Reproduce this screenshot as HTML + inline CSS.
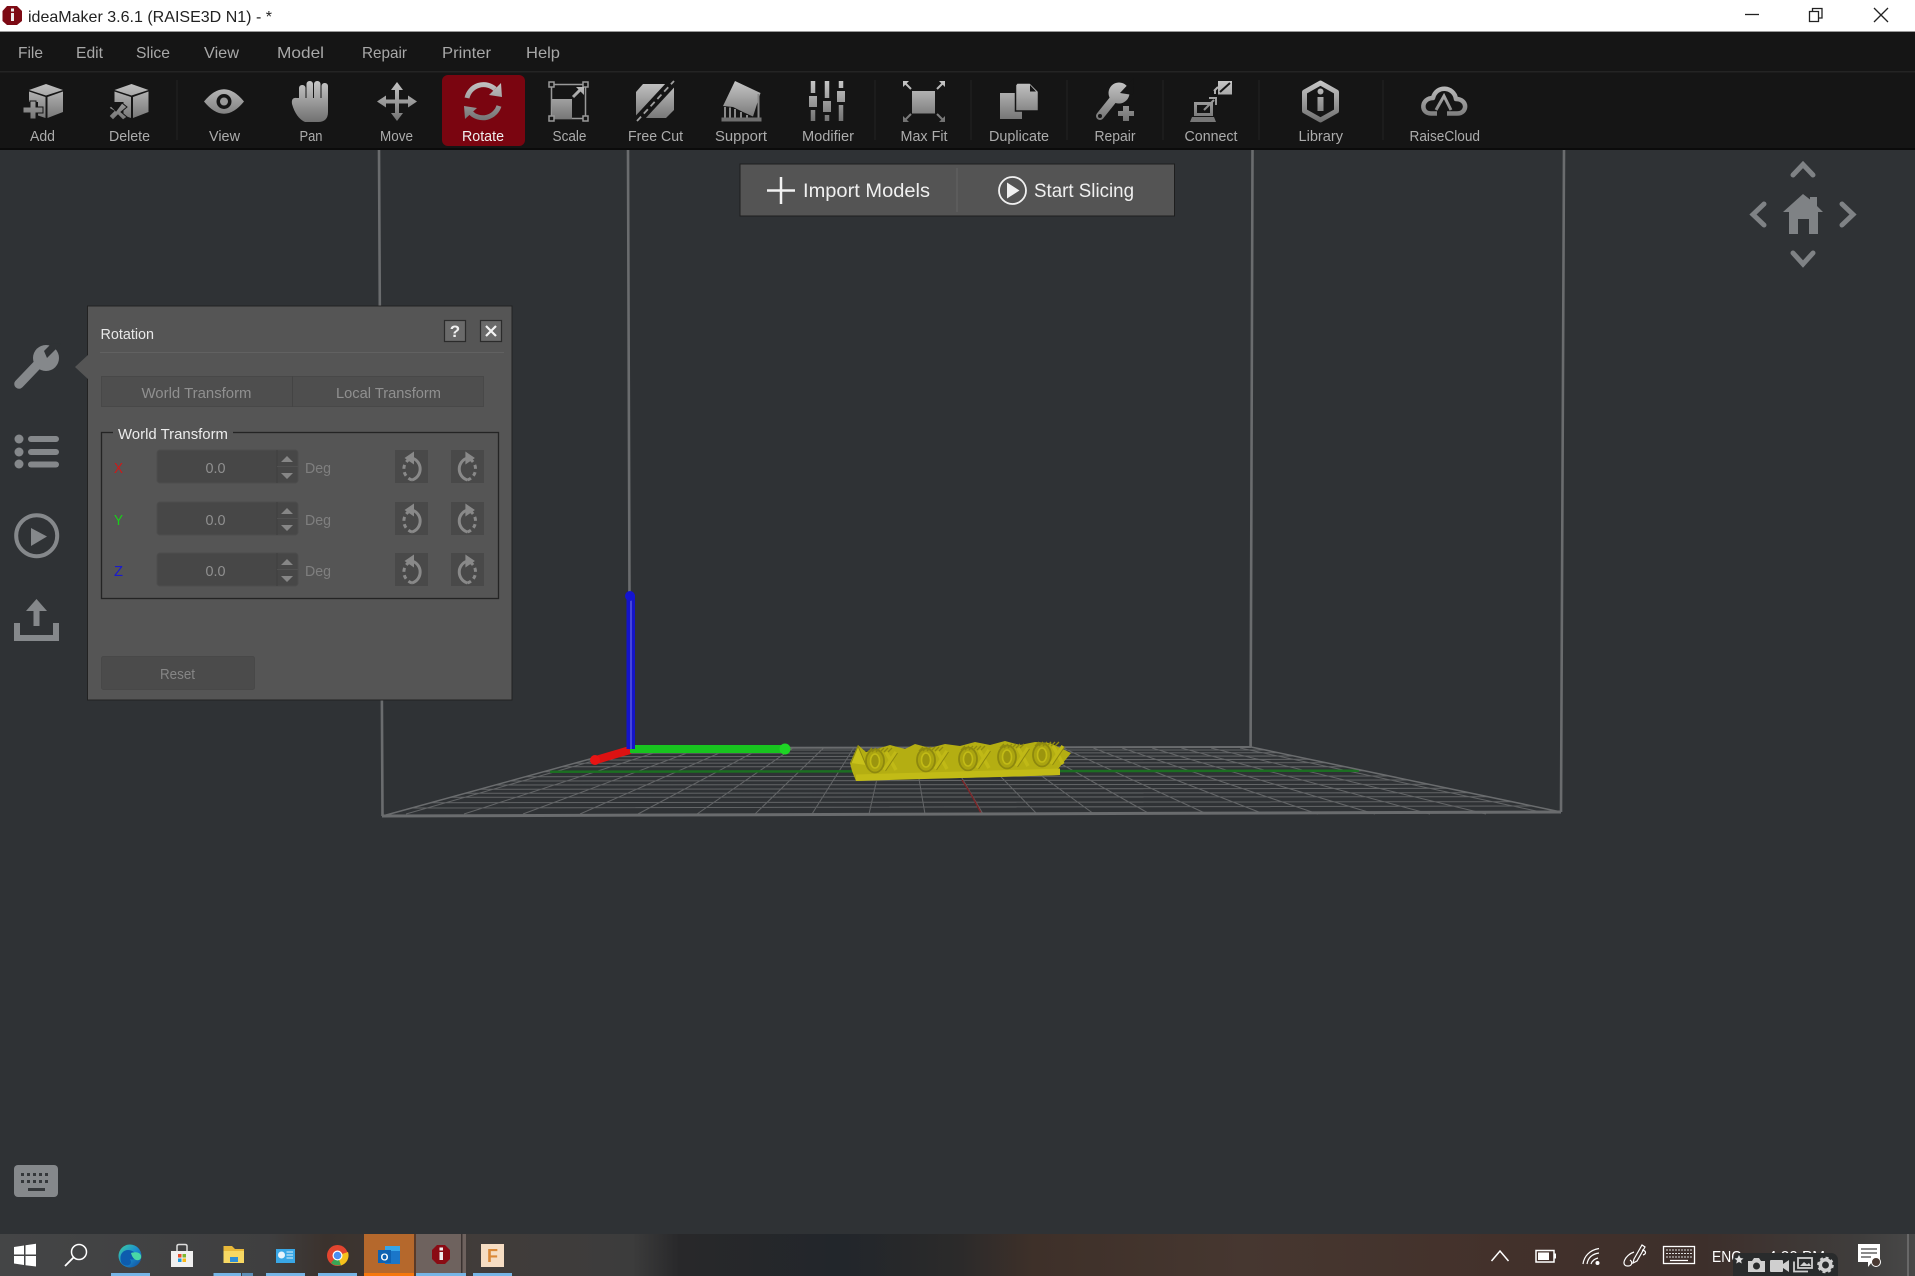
<!DOCTYPE html>
<html lang="en"><head><meta charset="utf-8"><title>ideaMaker 3.6.1 (RAISE3D N1) - *</title>
<style>html,body{margin:0;padding:0;background:#2f3235;overflow:hidden;width:1915px;height:1276px}svg{display:block}text{font-family:"Liberation Sans",sans-serif}</style></head><body>
<svg xmlns="http://www.w3.org/2000/svg" width="1915" height="1276" viewBox="0 0 1915 1276">
<defs>
<linearGradient id="g" gradientUnits="userSpaceOnUse" x1="0" y1="80" x2="0" y2="124"><stop offset="0" stop-color="#c8c8c8"/><stop offset="1" stop-color="#6c6c6c"/></linearGradient>
<linearGradient id="tb" x1="0" y1="0" x2="1" y2="0">
<stop offset="0" stop-color="#444546"/><stop offset=".14" stop-color="#3f3f40"/><stop offset=".17" stop-color="#3b322d"/><stop offset=".25" stop-color="#413c3a"/><stop offset=".33" stop-color="#3c3c3c"/><stop offset=".355" stop-color="#28282a"/><stop offset=".44" stop-color="#22262b"/><stop offset=".5" stop-color="#2b2a2a"/><stop offset=".54" stop-color="#3e3029"/><stop offset=".65" stop-color="#463730"/><stop offset=".78" stop-color="#43312b"/><stop offset=".89" stop-color="#3d2f2b"/><stop offset=".97" stop-color="#3f3d3c"/><stop offset="1" stop-color="#484848"/></linearGradient>
<linearGradient id="edge" x1="0" y1="0" x2="1" y2="1"><stop offset="0" stop-color="#3ecf9c"/><stop offset=".5" stop-color="#1b8fd0"/><stop offset="1" stop-color="#114a9a"/></linearGradient>
<g id="ccw" fill="none" stroke="#898989" stroke-width="3"><path d="M412 458 A11.500 11.500 0 0 1 412 480"/><path d="M412 480 A11.500 11.500 0 0 1 412 458" stroke-dasharray="4 3.400"/><path d="M404.500 458 L414 451.500 V464.500Z" fill="#898989" stroke="none"/></g>
<g id="spin"><rect x="157" y="450" width="141" height="33" rx="3" fill="#474747" stroke="#4d4d4d"/><path d="M277 450V483" stroke="#3f3f3f"/><path d="M277 466.500H298" stroke="#515151"/><path d="M281 462 L287 456 L293 462Z M281 473 H293 L287 479Z" fill="#868686"/><text x="205.500" y="473" font-size="14.500" fill="#909090" textLength="20" lengthAdjust="spacingAndGlyphs">0.0</text><text x="305" y="473" font-size="15" fill="#7f7f7f" textLength="26" lengthAdjust="spacingAndGlyphs">Deg</text><rect x="395" y="450" width="33" height="33" fill="#494949"/><rect x="451" y="450" width="33" height="33" fill="#494949"/><use href="#ccw"/><use href="#ccw" transform="translate(879.400 0) scale(-1 1)"/></g>
<g id="cube"><path d="M46 84 L63 90 L46 95.500 L29 90Z" fill="url(#g)"/><path d="M47.500 97 L63 91.500 V112 L47.500 118Z" fill="url(#g)"/><path d="M29 91.500 L45.500 97 V118 L38 115.500 V102 H29Z" fill="url(#g)"/></g>
<g id="yunit"><ellipse cx="0" cy="0" rx="9" ry="11.500" fill="#aaa410" stroke="#8d880e" stroke-width="1.800"/><ellipse cx="0" cy="0" rx="4.500" ry="7" fill="#9b950e" stroke="#c2bb16" stroke-width="1.600"/><path d="M9 9 L21 -9 M11 -9 L21 9" stroke="#c0b916" stroke-width="3.500"/><path d="M9 9 L21 -9" stroke="#8d880e" stroke-width="1" transform="translate(1.500 1)"/><path d="M-7 -9 L-3 -13 M-3 -9 L1 -13 M1 -9 L5 -13 M5 -9 L9 -13 M9 -9 L13 -13 M13 -9 L17 -13" stroke="#918b0f" stroke-width="1.300"/></g>
</defs>

<rect width="1915" height="1276" fill="#2f3235"/>
<!-- title bar -->
<rect width="1915" height="31" fill="#fff"/><rect y="31" width="1915" height="1" fill="#9a9a9a"/>
<path d="M7 6 H17 L22 11 V21 L17 25 H7 L2.500 21 V11Z" fill="#7d0a14"/><rect x="11" y="13" width="3" height="8" fill="#eee"/><rect x="11" y="8.500" width="3" height="3" fill="#eee"/>
<text x="28" y="22" font-size="16" fill="#222" textLength="244" lengthAdjust="spacingAndGlyphs">ideaMaker 3.6.1 (RAISE3D N1) - *</text>
<path d="M1745 14.500H1759" stroke="#222" stroke-width="1.300"/>
<path d="M1809.500 11.500H1818.500V21.500H1809.500Z M1812.500 11V8.500H1822V18H1819" fill="none" stroke="#222" stroke-width="1.300"/>
<path d="M1874 8L1888 22M1888 8L1874 22" stroke="#222" stroke-width="1.300"/>
<!-- menu + toolbar -->
<rect y="32" width="1915" height="117" fill="#151515"/><rect y="71" width="1915" height="1.500" fill="#242424"/><rect y="148" width="1915" height="2" fill="#0b0b0b"/>
<g font-size="16" fill="#a8a8a8">
<text x="18" y="58" textLength="25" lengthAdjust="spacingAndGlyphs">File</text>
<text x="76" y="58" textLength="27" lengthAdjust="spacingAndGlyphs">Edit</text>
<text x="136" y="58" textLength="34" lengthAdjust="spacingAndGlyphs">Slice</text>
<text x="204" y="58" textLength="35" lengthAdjust="spacingAndGlyphs">View</text>
<text x="277" y="58" textLength="47" lengthAdjust="spacingAndGlyphs">Model</text>
<text x="362" y="58" textLength="45" lengthAdjust="spacingAndGlyphs">Repair</text>
<text x="442" y="58" textLength="49" lengthAdjust="spacingAndGlyphs">Printer</text>
<text x="526" y="58" textLength="34" lengthAdjust="spacingAndGlyphs">Help</text>
</g>
<path d="M177 80V140M875 80V140M971 80V140M1067 80V140M1163 80V140M1259 80V140M1383 80V140" stroke="#232323"/>
<rect x="442" y="75" width="83" height="71" rx="6" fill="#7a0510"/>
<g font-size="15" fill="#acacac">
<text x="30" y="141" textLength="25" lengthAdjust="spacingAndGlyphs">Add</text>
<text x="109" y="141" textLength="41" lengthAdjust="spacingAndGlyphs">Delete</text>
<text x="209" y="141" textLength="31" lengthAdjust="spacingAndGlyphs">View</text>
<text x="299.500" y="141" textLength="23" lengthAdjust="spacingAndGlyphs">Pan</text>
<text x="380" y="141" textLength="33" lengthAdjust="spacingAndGlyphs">Move</text>
<text x="462" y="141" textLength="42" lengthAdjust="spacingAndGlyphs" fill="#efefef">Rotate</text>
<text x="552.500" y="141" textLength="34" lengthAdjust="spacingAndGlyphs">Scale</text>
<text x="628" y="141" textLength="55" lengthAdjust="spacingAndGlyphs">Free Cut</text>
<text x="715" y="141" textLength="52" lengthAdjust="spacingAndGlyphs">Support</text>
<text x="802" y="141" textLength="52" lengthAdjust="spacingAndGlyphs">Modifier</text>
<text x="900.500" y="141" textLength="47" lengthAdjust="spacingAndGlyphs">Max Fit</text>
<text x="989" y="141" textLength="60" lengthAdjust="spacingAndGlyphs">Duplicate</text>
<text x="1094.500" y="141" textLength="41" lengthAdjust="spacingAndGlyphs">Repair</text>
<text x="1184.500" y="141" textLength="53" lengthAdjust="spacingAndGlyphs">Connect</text>
<text x="1298.500" y="141" textLength="44.500" lengthAdjust="spacingAndGlyphs">Library</text>
<text x="1409.500" y="141" textLength="70.500" lengthAdjust="spacingAndGlyphs">RaiseCloud</text>
</g>
<!-- Add -->
<use href="#cube"/><path d="M30 101H36V107H43V113H36V119H30V113H23V107H30Z" fill="url(#g)" stroke="#151515" stroke-width="1"/>
<!-- Delete -->
<use href="#cube" transform="translate(85.500 0)"/><path d="M111 106L116 111 L122 103 L127 107 L121 112 L127 117 L123 120 L118 115 L113 120 L109 116 L114 111 L109 108Z" fill="url(#g)" stroke="#151515" stroke-width="1"/>
<!-- View -->
<path d="M204 101.500 Q224 77 244 101.500 Q224 126 204 101.500Z" fill="url(#g)"/><circle cx="224" cy="101.500" r="7.500" fill="#151515"/><circle cx="224" cy="101.500" r="4" fill="#999"/>
<!-- Pan -->
<g fill="url(#g)"><rect x="299" y="85" width="6.500" height="20" rx="3"/><rect x="306.500" y="81" width="6.500" height="24" rx="3"/><rect x="314" y="81" width="6.500" height="24" rx="3"/><rect x="321.500" y="83" width="6.500" height="24" rx="3"/><path d="M299 98 H328 V112 Q328 122 318 122 H305 Q296 118 292 104 Q291 97 297 98Z"/></g>
<!-- Move -->
<path d="M397 82 L403 90 H399 V99.500 H408 V95.500 L417 101.500 L408 107.500 V103.500 H399 V113 H403 L397 121 L391 113 H395 V103.500 H386 V107.500 L377 101.500 L386 95.500 V99.500 H395 V90 H391Z" fill="url(#g)"/>
<!-- Rotate -->
<g fill="none" stroke="url(#g)" stroke-width="5"><path d="M467 98 A17 17 0 0 1 495 89"/><path d="M499 106 A17 17 0 0 1 471 113"/></g><path d="M489 95 L502 97 L501 83Z M464 106 L477 108 L465 119Z" fill="url(#g)"/>
<!-- Scale -->
<rect x="551.500" y="84.500" width="34" height="34" fill="none" stroke="#999" stroke-width="1.500"/><rect x="552" y="99" width="20" height="20" fill="url(#g)"/>
<g fill="#151515" stroke="#999" stroke-width="1.500"><rect x="549" y="82" width="5" height="5"/><rect x="583" y="82" width="5" height="5"/><rect x="549" y="116" width="5" height="5"/><rect x="583" y="116" width="5" height="5"/></g>
<path d="M573 97 L580 90" stroke="url(#g)" stroke-width="3"/><path d="M576 87 H584 V95Z" fill="url(#g)"/>
<!-- Free Cut -->
<path d="M643 84 H674 V110 L666 118 H636 V92Z" fill="url(#g)"/><path d="M637 121 L674 81" stroke="#151515" stroke-width="9"/><path d="M637 121 L674 81" stroke="#a0a0a0" stroke-width="1.800" stroke-dasharray="6 4"/>
<!-- Support -->
<path d="M735 81 L760.500 93 L753 116.500 L743 112 L733 107 L723 106Z" fill="url(#g)"/><path d="M725 107V118M730 107.500V118M735 109V118M741 112V118M747 115V118M758.500 94V118" stroke="#888" stroke-width="2"/><rect x="721.500" y="117.500" width="40" height="4" fill="#6f6f6f"/>
<!-- Modifier -->
<g stroke="url(#g)" stroke-width="4.500"><path d="M813 81V93M813 110V121M827 81V98M827 115V121M841 81V88M841 105V121"/></g><g fill="url(#g)"><rect x="809" y="96" width="8" height="11"/><rect x="823" y="101" width="8" height="11"/><rect x="837" y="91" width="8" height="11"/></g>
<!-- Max Fit -->
<rect x="912" y="91" width="23" height="22.500" fill="url(#g)"/><path d="M903 81H909L903 87Z M945 81H939L945 87Z M903 122H909L903 116Z M945 122H939L945 116Z" fill="url(#g)"/><path d="M905 83L911 89M943 83L937 89M905 120L911 114M943 120L937 114" stroke="url(#g)" stroke-width="2"/>
<!-- Duplicate -->
<rect x="1000" y="93" width="22" height="26" fill="url(#g)"/><path d="M1017 83 H1030 L1038.500 91.500 V111 H1015.500 V85Z" fill="url(#g)" stroke="#151515" stroke-width="1.500"/><path d="M1030 85 V91.500 H1036" fill="#151515"/>
<!-- Repair -->
<path d="M1100 116 L1116 96" stroke="url(#g)" stroke-width="8" stroke-linecap="round"/><circle cx="1119" cy="93" r="10.500" fill="url(#g)"/><path d="M1120 93 L1134 78 L1133 95Z" fill="#151515"/><circle cx="1100" cy="116" r="2" fill="#151515"/><path d="M1123 106H1129V111H1134V116H1129V121H1123V116H1118V111H1123Z" fill="url(#g)"/>
<!-- Connect -->
<path d="M1194 102H1213V116H1194ZM1197 105V113H1210V105Z" fill="url(#g)" fill-rule="evenodd"/><path d="M1192 117 H1214 L1216 122 H1190Z" fill="#777"/><rect x="1218" y="81" width="14" height="13.500" fill="url(#g)"/><path d="M1220 92L1230 83" stroke="#151515" stroke-width="2"/><path d="M1214 91L1218 87M1204 110L1214 100M1209 98H1216V105M1215 94V90" stroke="url(#g)" stroke-width="2" fill="none"/>
<!-- Library -->
<path d="M1320.500 83 L1336.500 92 V111 L1320.500 120 L1304.500 111 V92Z" fill="none" stroke="url(#g)" stroke-width="5" stroke-linejoin="round"/><circle cx="1320.500" cy="91.500" r="3" fill="url(#g)"/><rect x="1317.500" y="97" width="6" height="14" fill="url(#g)"/>
<!-- RaiseCloud -->
<path d="M1437 113.500 H1431 C1420 113.500 1421 98 1433 98 C1436 85 1454 86 1456 99 C1468 99 1468 113.500 1457 113.500 H1447" fill="none" stroke="url(#g)" stroke-width="4.500" stroke-linejoin="round"/><path d="M1436 110 L1444 96 L1451 110" fill="none" stroke="url(#g)" stroke-width="3"/>

<!-- cage -->
<path d="M411.700 808L1532.400 806M431 802.700L1511.900 801.700M450.600 797.300L1488 796.700M465 793.300L1469 792.700M479.700 789.300L1448 788.300M495.400 785L1428.900 784.300M510 781L1408.400 780M525.600 776.700L1389.300 776M543.800 771.700L1364 770.700M562 766.700L1345 766.700M574.300 763.300L1325.800 762.700M586.300 760L1309.600 759.300M598.300 756.700L1293.900 756M610.700 753.300L1278 752.700M622.700 750L1265 750M406 814L638.600 748M464 814L669.300 748M523 814L700.600 748M580 814L730.800 748M638 814L761.500 748M697 814L792.800 748M755 814L823.500 748M812 814L853.700 748M869 814L884 748M925 814L913.700 748M983 814L944.400 748M1037 814L973 748M1094 814L1003.200 748M1150 814L1033 748M1207 814L1063 748M1264 814L1093.300 748M1318 814L1122 748M1375 814L1152 748M1430 814L1181.300 748M1486 814L1211 748M1541 812L1240 748" stroke="#636567" stroke-width="1" fill="none"/>
<path d="M550 771.700L1359 770.700" stroke="#1c6e22" stroke-width="2.500"/>
<path d="M962 780Q972 795 981 813" stroke="#7a2528" stroke-width="1.500" fill="none"/>
<g stroke="#6a6c6e" fill="none"><path d="M379 150L382.500 816M628 150L630 748M1252.500 150L1250.600 747M1564 150L1561 812" stroke-width="2.600"/><path d="M382 816L1561 812" stroke-width="3"/><path d="M630 748L1251 747" stroke-width="2"/><path d="M382.500 816L630 748M1561 812L1251 747" stroke-width="1.500"/></g>
<!-- yellow model -->
<path d="M850 763 L858 745 L866 752 L880 748 L890 745 L905 749 L915 744 L930 748 L945 744 L960 746 L975 742 L990 745 L1005 741 L1020 745 L1035 742 L1050 743 L1071 753 L1058 769 L1060 775 L1000 777 L960 778 L900 779 L856 781 L852 771Z" fill="#b4ae12"/>
<use href="#yunit" transform="translate(875 761)"/><use href="#yunit" transform="translate(926 760)"/><use href="#yunit" transform="translate(968 759)"/><use href="#yunit" transform="translate(1007 757)"/><use href="#yunit" transform="translate(1042 755)"/>
<path d="M856 774.500 L960 771.500 L1060 768.500 V775 L960 778 L856 781Z" fill="#c2bb16"/>
<path d="M851 763 L858 746 L866 765" fill="#c8c11a" stroke="#8d880e"/>
<!-- axes -->
<path d="M630 750L596 760" stroke="#dd1212" stroke-width="8"/><circle cx="595" cy="760" r="5" fill="#e81414"/>
<rect x="630" y="745" width="155" height="8" fill="#18c41f"/><circle cx="785" cy="749" r="5.500" fill="#1ed425"/>
<rect x="626.500" y="595" width="8.500" height="154" fill="#1414c8"/><rect x="630" y="595" width="2" height="154" fill="#4545dc"/><circle cx="630" cy="596" r="5" fill="#1414d0"/>

<!-- import bar -->
<rect x="740" y="164" width="434.500" height="52" fill="#545454" stroke="#1e1e1e"/>
<path d="M957 168V212" stroke="#646464"/>
<path d="M781 177V204M767 190.500H795" stroke="#f2f2f2" stroke-width="2.500"/>
<text x="803" y="197" font-size="19.500" fill="#f0f0f0" textLength="127" lengthAdjust="spacingAndGlyphs">Import Models</text>
<circle cx="1012.500" cy="190.500" r="13.500" fill="none" stroke="#f0f0f0" stroke-width="1.800"/><path d="M1007 182.500 L1019.500 190.500 L1007 198.500Z" fill="#f0f0f0"/>
<text x="1034" y="197" font-size="19.500" fill="#f0f0f0" textLength="100" lengthAdjust="spacingAndGlyphs">Start Slicing</text>

<!-- nav -->
<g fill="none" stroke="#7f8285" stroke-width="5" stroke-linecap="round"><path d="M1793 175 L1803 164.500 L1813 175"/><path d="M1793 253 L1803 264 L1813 253"/><path d="M1764 204 L1753 214.500 L1764 225"/><path d="M1842 204 L1853 214.500 L1842 225"/></g>
<path d="M1803 194 L1810 199.500 V197 H1817 V206 L1823 212 H1818 V234 H1809 V219 H1798 V234 H1789 V212 H1783Z" fill="#7f8285"/>

<!-- side icons -->
<g fill="#85888b"><path d="M19 384 L40 362" stroke="#85888b" stroke-width="9.500" stroke-linecap="round"/><circle cx="46" cy="358" r="13"/><path d="M47 358 L61 344 L52 343 L44 351Z" fill="#2f3235"/>
<circle cx="19" cy="439" r="4.500"/><circle cx="19" cy="452" r="4.500"/><circle cx="19" cy="464" r="4.500"/><rect x="28" y="436" width="31" height="6" rx="3"/><rect x="28" y="449" width="31" height="6" rx="3"/><rect x="28" y="461.500" width="31" height="6" rx="3"/>
<path d="M31 528 V546 L47 536.500Z"/><path d="M26 611 L36.500 599 L47 611 H39.500 V626 H33.500 V611Z"/><path d="M14 623 H20 V635 H53 V623 H59 V641 H14Z"/></g>
<circle cx="36.700" cy="535.700" r="20.500" fill="none" stroke="#85888b" stroke-width="4"/>
<rect x="14" y="1165" width="44" height="32" rx="4" fill="#85888b"/>
<path d="M21 1173h3v3h-3zM27 1173h3v3h-3zM33 1173h3v3h-3zM39 1173h3v3h-3zM45 1173h3v3h-3zM21 1180h3v3h-3zM27 1180h3v3h-3zM33 1180h3v3h-3zM39 1180h3v3h-3zM45 1180h3v3h-3zM28 1188h17v3h-17z" fill="#34373a"/>

<!-- rotation panel -->
<rect x="87.500" y="306" width="424.500" height="394" fill="#555" stroke="#222" stroke-width="1"/>
<path d="M89 354 L75 367 L89 380Z" fill="#555"/>
<text x="100.500" y="339" font-size="15" fill="#e8e8e8" textLength="53.500" lengthAdjust="spacingAndGlyphs">Rotation</text>
<path d="M100 352.500H504" stroke="#616161"/>
<rect x="444.500" y="320.500" width="21" height="21" fill="#6a6a6a" stroke="#2b2b2b" stroke-width="1.200"/>
<text x="455" y="337" font-size="17" font-weight="bold" text-anchor="middle" fill="#f0f0f0">?</text>
<rect x="480.500" y="320.500" width="21" height="21" fill="#6a6a6a" stroke="#2b2b2b" stroke-width="1.200"/>
<path d="M486 326L496 336M496 326L486 336" stroke="#f4f4f4" stroke-width="2.200"/>
<rect x="101.500" y="376.500" width="382" height="30" fill="#4e4e4e" stroke="#484848"/><path d="M292.500 376V407" stroke="#444"/>
<text x="141.500" y="398" font-size="15" fill="#909090" textLength="110" lengthAdjust="spacingAndGlyphs">World Transform</text>
<text x="336" y="398" font-size="15" fill="#909090" textLength="105" lengthAdjust="spacingAndGlyphs">Local Transform</text>
<rect x="101.500" y="432.500" width="397" height="166" fill="none" stroke="#242424" stroke-width="1.300"/>
<rect x="113" y="428" width="120" height="8" fill="#555"/>
<text x="118" y="439" font-size="15" fill="#ececec" textLength="110" lengthAdjust="spacingAndGlyphs">World Transform</text>
<use href="#spin"/><use href="#spin" transform="translate(0 52)"/><use href="#spin" transform="translate(0 103)"/>
<text x="114" y="473" font-size="15" fill="#d01818" textLength="9" lengthAdjust="spacingAndGlyphs">X</text>
<text x="114" y="525" font-size="15" fill="#18d018" textLength="9" lengthAdjust="spacingAndGlyphs">Y</text>
<text x="114" y="576" font-size="15" fill="#1a1ad0" textLength="9" lengthAdjust="spacingAndGlyphs">Z</text>
<rect x="101.500" y="656.500" width="153" height="33" rx="2" fill="#4b4b4b" stroke="#484848"/>
<text x="160" y="679" font-size="15" fill="#868686" textLength="35" lengthAdjust="spacingAndGlyphs">Reset</text>

<!-- taskbar -->
<rect y="1234" width="1915" height="42" fill="url(#tb)"/>
<rect x="364" y="1234" width="50" height="42" fill="#b5682c"/><rect x="414" y="1234" width="2" height="42" fill="#5a3a28"/><rect x="416" y="1234" width="50" height="42" fill="#6e625e"/><rect x="461" y="1234" width="1.500" height="42" fill="#3a3230"/>
<g fill="#76b5e6"><rect x="111" y="1273" width="39" height="3"/><rect x="213.500" y="1273" width="27.500" height="3"/><rect x="242" y="1273" width="11" height="3" fill="#5d8fb8"/><rect x="266" y="1273" width="39" height="3"/><rect x="318" y="1273" width="39" height="3"/><rect x="416" y="1273" width="50" height="3"/><rect x="473" y="1273" width="39" height="3"/></g>
<rect x="364" y="1273" width="50" height="3" fill="#f7780c"/>
<path d="M14 1247 L24 1245.500 V1254.500 H14Z M25.500 1245.200 L36 1243.800 V1254.500 H25.500Z M14 1256 H24 V1265 L14 1263.500Z M25.500 1256 H36 V1266.500 L25.500 1265.200Z" fill="#fff"/>
<circle cx="79" cy="1252" r="7.500" fill="none" stroke="#fff" stroke-width="1.500"/><path d="M73.500 1257.500L65 1266" stroke="#fff" stroke-width="1.800"/>
<circle cx="130" cy="1256" r="11.500" fill="url(#edge)"/><path d="M121 1262 C118 1252 127 1247 134 1252 C140 1256 134 1261 130 1259 C134 1266 124 1268 121 1262Z" fill="#0d5cae"/><path d="M131 1253 C137 1251 142 1253 141 1258 C139 1262 133 1261 131 1253Z" fill="#49d8a6"/>
<path d="M171 1251 H193 V1267 H171Z" fill="#f0f0f0"/><path d="M177 1251 V1246 Q177 1244.500 179 1244.500 H185 Q187 1244.500 187 1246 V1251" fill="none" stroke="#ddd" stroke-width="1.500"/><rect x="178" y="1254" width="3.500" height="3.500" fill="#e74c2a"/><rect x="182.500" y="1254" width="3.500" height="3.500" fill="#7cb82f"/><rect x="178" y="1258.500" width="3.500" height="3.500" fill="#1c9ce0"/><rect x="182.500" y="1258.500" width="3.500" height="3.500" fill="#fab915"/>
<path d="M223.500 1246 H232 L235 1249 H244 V1263 H223.500Z" fill="#e8b839"/><path d="M223.500 1251 H244 V1263 H223.500Z" fill="#f7d863"/><rect x="230" y="1257" width="8" height="5" fill="#2f8fd6"/>
<rect x="276" y="1249" width="19" height="14" fill="#39a7e6"/><circle cx="281.500" cy="1255" r="3.500" fill="#e7f3fb"/><path d="M286.500 1252H293M286.500 1255H293M286.500 1258H293" stroke="#e0f0fa" stroke-width="1"/>
<circle cx="337.500" cy="1255.500" r="10.500" fill="#e3452f"/><path d="M337.500 1255.500 L331 1263 A10.500 10.500 0 0 0 345 1262.500 L348 1255Z" fill="#3aa655"/><path d="M337.500 1255.500 L348 1252 A10.500 10.500 0 0 1 341 1265.500Z" fill="#f6c11c"/><circle cx="337.500" cy="1255.500" r="5" fill="#fff"/><circle cx="337.500" cy="1255.500" r="3.800" fill="#4b8ef0"/>
<rect x="385" y="1246" width="15" height="18" fill="#1a76c9"/><rect x="385" y="1246" width="15" height="5" fill="#36a5e8"/><rect x="378" y="1250" width="13" height="13" fill="#0e62b2"/><text x="384.500" y="1260.500" font-size="10" font-weight="bold" text-anchor="middle" fill="#fff">O</text>
<path d="M437 1245 H445 L450 1250 V1259 L445 1264 H437 L432 1259 V1250Z" fill="#8a0b14"/><rect x="439.500" y="1252" width="3.500" height="8" fill="#eee"/><rect x="439.500" y="1247.500" width="3.500" height="3" fill="#eee"/>
<rect x="481" y="1244" width="23" height="23" fill="#f6ddc3"/><text x="492.500" y="1262" font-size="18" font-weight="bold" text-anchor="middle" fill="#d98838">F</text>
<!-- tray -->
<path d="M1491.500 1261 L1500 1251 L1508.500 1261" fill="none" stroke="#fff" stroke-width="1.500"/>
<rect x="1536" y="1250.500" width="18" height="11.500" fill="none" stroke="#fff" stroke-width="1.500"/><rect x="1538" y="1252.500" width="11" height="7.500" fill="#fff"/><rect x="1554.500" y="1253.500" width="1.500" height="5" fill="#fff"/>
<path d="M1583 1264 C1584 1256 1590 1250 1599 1248.500 M1587 1264 C1588 1258 1592 1254 1599 1253 M1591 1264 C1592 1261 1594 1259 1598 1258" fill="none" stroke="#fff" stroke-width="1.200"/><circle cx="1597.500" cy="1263" r="2" fill="#fff"/>
<path d="M1634 1259 L1642 1245 L1645 1247 L1637 1261 L1633 1263Z" fill="none" stroke="#fff" stroke-width="1.200"/><path d="M1634 1252 C1625 1255 1620 1266 1628 1266 C1632 1266 1633 1262 1630 1260 M1642 1250 C1647 1251 1646 1254 1643 1255" fill="none" stroke="#fff" stroke-width="1.200"/>
<rect x="1663.500" y="1246.500" width="31" height="17" fill="none" stroke="#fff" stroke-width="1.300"/><path d="M1666 1250H1692M1666 1253.500H1692M1666 1257H1692" stroke="#ddd" stroke-width="1" stroke-dasharray="2 1"/><path d="M1670 1260.500H1688" stroke="#fff" stroke-width="1.200"/>
<text x="1712" y="1262" font-size="15.500" fill="#fff" textLength="30" lengthAdjust="spacingAndGlyphs">ENG</text>
<text x="1768" y="1262" font-size="15.500" fill="#fff" textLength="57" lengthAdjust="spacingAndGlyphs">4:20 PM</text>
<rect x="1733" y="1253" width="105" height="30" rx="7" fill="#292b2c"/>
<path d="M1739 1255 L1740.500 1258 L1743.500 1258.500 L1741 1260.500 L1741.800 1263.500 L1739 1262 L1736.200 1263.500 L1737 1260.500 L1734.500 1258.500 L1737.500 1258Z" fill="#ddd"/>
<path d="M1748 1261 H1752 L1754 1258 H1759 L1761 1261 H1765 V1272 H1748Z" fill="#cfcfcf"/><circle cx="1756.500" cy="1266" r="3.500" fill="#292b2c"/>
<rect x="1770" y="1260" width="13" height="12" rx="1" fill="#cfcfcf"/><path d="M1783 1264 L1789 1260 V1272 L1783 1268Z" fill="#cfcfcf"/>
<rect x="1798" y="1258" width="14" height="10" fill="none" stroke="#cfcfcf" stroke-width="1.800"/><path d="M1794 1261.500 V1271.500 H1808" fill="none" stroke="#cfcfcf" stroke-width="1.800"/><path d="M1800 1266 L1804 1262 L1807 1264.500 L1809 1263 L1811 1266Z" fill="#cfcfcf"/>
<circle cx="1825.500" cy="1265" r="5.200" fill="none" stroke="#cfcfcf" stroke-width="3.500"/><circle cx="1825.500" cy="1265" r="7.300" fill="none" stroke="#cfcfcf" stroke-width="2" stroke-dasharray="3 2.700"/>
<path d="M1858 1244 H1880 V1262 H1872 L1868 1267 V1262 H1858Z" fill="#fff"/><path d="M1861 1249H1877M1861 1253H1877M1861 1257H1871" stroke="#444" stroke-width="1.300"/><circle cx="1876" cy="1262" r="4.500" fill="#4a3a33" stroke="#fff" stroke-width="1"/>
<rect x="1907.500" y="1234" width="1" height="42" fill="#8a8a8a"/>
</svg>
</body></html>
